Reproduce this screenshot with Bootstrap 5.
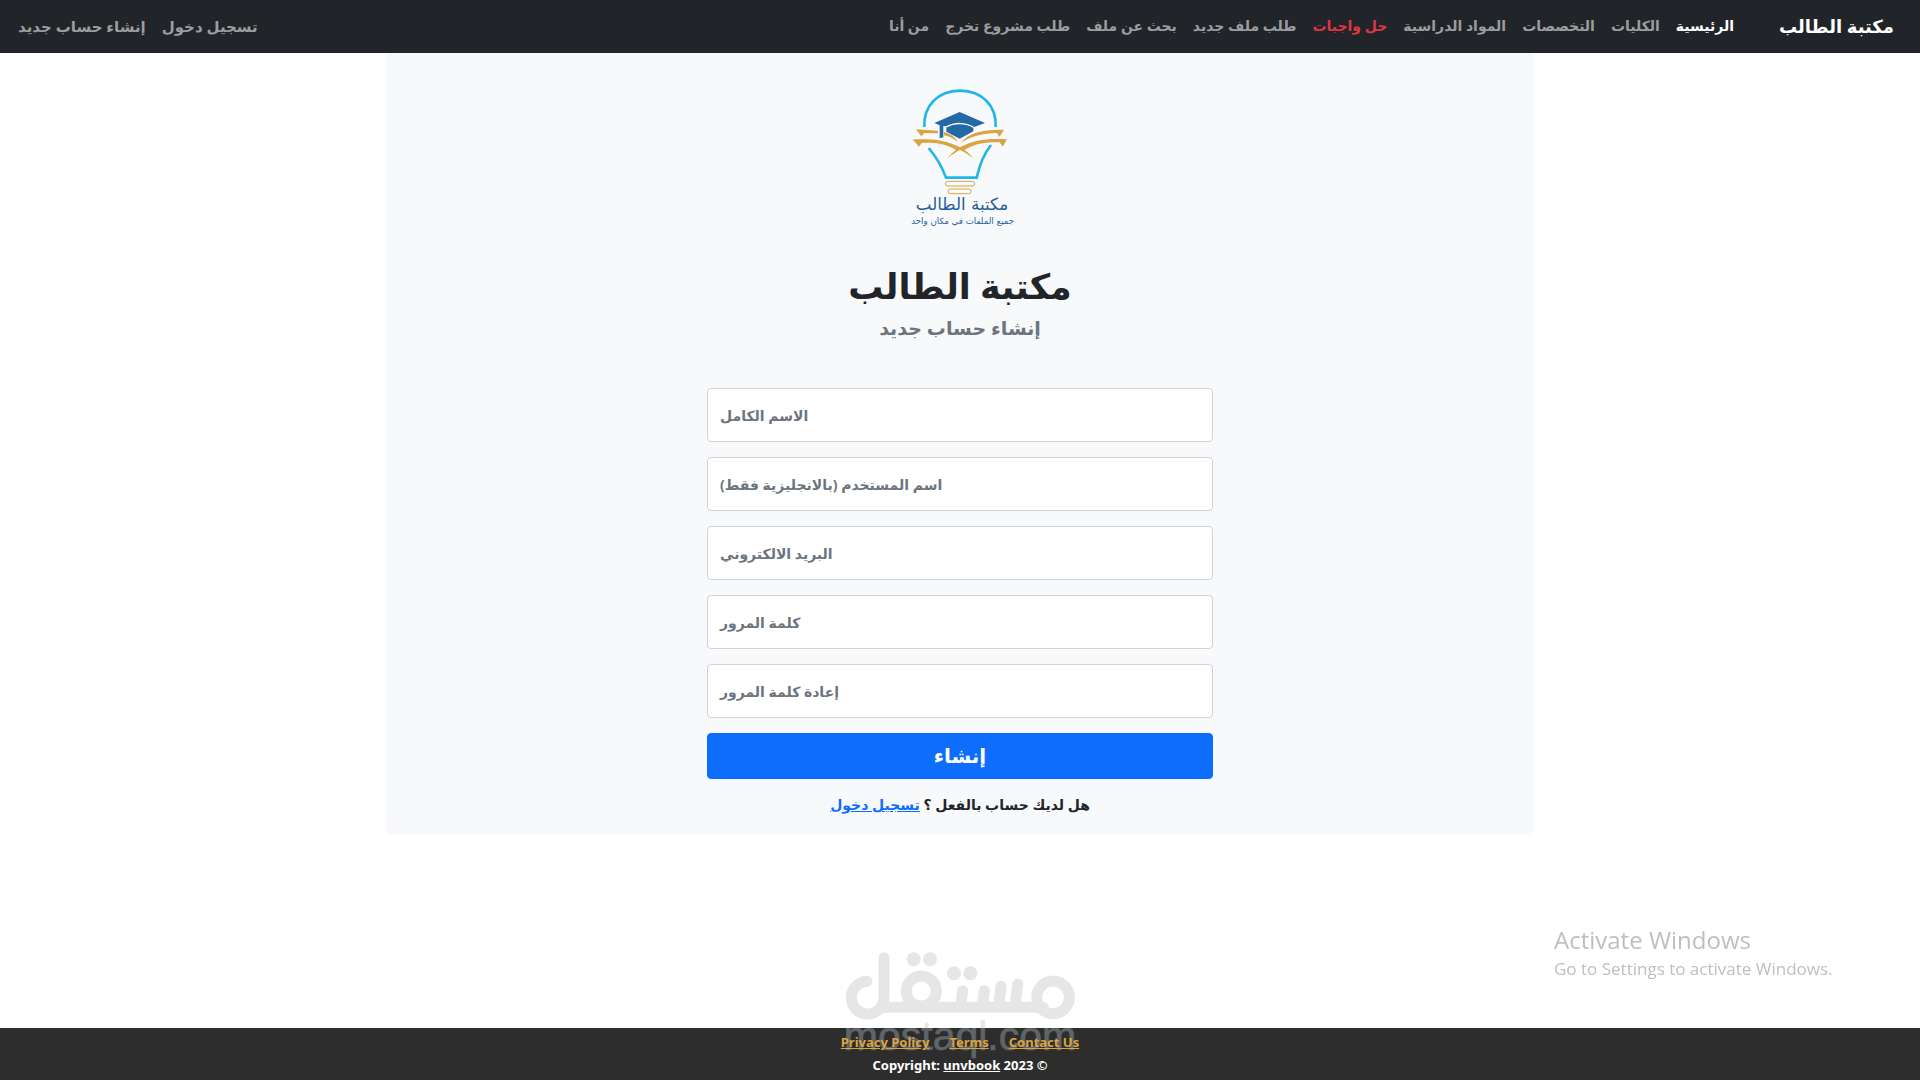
<!DOCTYPE html>
<html lang="ar" dir="rtl">
<head>
<meta charset="utf-8">
<meta name="viewport" content="width=device-width, initial-scale=1">
<title>مكتبة الطالب</title>
<link href="https://cdn.jsdelivr.net/npm/bootstrap@5.3.0/dist/css/bootstrap.min.css" rel="stylesheet">
<style>
  body { font-family: "Noto Sans", "DejaVu Sans", sans-serif; font-weight: 700; font-size: 14px; background: #fff; }
  .site-nav { min-height: 53px; padding: 0 10px 2px; font-size: 14px; line-height: 20px; }
  .site-nav .navbar-brand { font-size: 18px; margin: 0 0 0 21px; padding: 0 16px; }
  .site-nav .nav-link { color: #9b9d9e; padding: 8px; white-space: nowrap; }
  .site-nav .nav-link.active { color: #fff; }
  .site-nav .nav-link.hot { color: #dc3545; }
  .site-nav .account-nav { font-size: 15px; }
  .signup { max-width: 1148px; background: #f8f9fb; padding: 17px 0 20px; }
  .signup-logo { width: 160px; height: 170px; }
  .signup h1 { font-size: 35px; line-height: 44px; font-weight: 700; color: #212529; }
  .signup h2 { font-size: 19px; line-height: 24px; font-weight: 700; color: #6c757d; }
  .signup form { width: 506px; max-width: 100%; gap: 15px; margin-top: 48px; }
  .form-floating > .form-control { height: 54px; min-height: 54px; border-color: #ced4da; border-radius: 4px; font-size: 14px; }
  .form-floating > label { left: 0; right: auto; width: auto; height: 54px; padding: 17px 12px; line-height: 20px; color: #6c757d; }
  .btn-create { height: 46px; font-size: 20px; line-height: 24px; font-weight: 700; border-radius: 4px; padding: 0; }
  .have-account { line-height: 20px; color: #212529; }
  .site-foot { background: #2d2d2d; height: 52px; font-size: 13px; line-height: 23px; padding-top: 3px; }
  .foot-links { gap: 20px; }
  .gold-link { color: #dba43f; }
  .watermark { width: 300px; height: 150px; bottom: 0; left: 50%; margin-left: -150px; }
  .os-note { right: 82px; bottom: 98px; width: 284px; color: #bcc0c4; font-family: "Open Sans", sans-serif; font-weight: 400; white-space: nowrap; }
  .os-note .os-title { font-size: 24px; line-height: 32px; }
  .os-note .os-text { font-size: 17px; line-height: 26px; }
</style>
</head>
<body class="d-flex flex-column min-vh-100">
<nav class="navbar navbar-expand-lg bg-dark site-nav">
  <a class="navbar-brand text-white" href="#">مكتبة الطالب</a>
  <ul class="navbar-nav p-0">
    <li class="nav-item"><a class="nav-link active" href="#">الرئيسية</a></li>
    <li class="nav-item"><a class="nav-link" href="#">الكليات</a></li>
    <li class="nav-item"><a class="nav-link" href="#">التخصصات</a></li>
    <li class="nav-item"><a class="nav-link" href="#">المواد الدراسية</a></li>
    <li class="nav-item"><a class="nav-link hot" href="#">حل واجبات</a></li>
    <li class="nav-item"><a class="nav-link" href="#">طلب ملف جديد</a></li>
    <li class="nav-item"><a class="nav-link" href="#">بحث عن ملف</a></li>
    <li class="nav-item"><a class="nav-link" href="#">طلب مشروع تخرج</a></li>
    <li class="nav-item"><a class="nav-link" href="#">من أنا</a></li>
  </ul>
  <ul class="navbar-nav account-nav p-0 flex-grow-1 justify-content-end">
    <li class="nav-item"><a class="nav-link" href="#">تسجيل دخول</a></li>
    <li class="nav-item"><a class="nav-link" href="#">إنشاء حساب جديد</a></li>
  </ul>
</nav>

<main class="signup w-100 mx-auto rounded d-flex flex-column align-items-center text-center">
  <svg class="signup-logo" viewBox="0 0 480 510" role="img" aria-label="مكتبة الطالب">
    <g fill="none" stroke="#1fb6e9" stroke-width="8">
      <path d="M133 171C130 105 175 63 240 62C305 63 350 105 347 171"/>
      <path d="M146 234C168 260 186 290 198 323H290C298 288 311 252 333 225"/>
    </g>
    <g fill="#d9a441">
      <path d="M98 208C150 206 198 208 240 232C282 208 330 204 381 208L368 230L359 217C320 215 285 220 253 240C264 247 272 255 279 264C264 253 252 246 240 240C228 246 217 253 203 265C210 254 219 247 228 240C195 220 160 217 125 219L117 230Z"/>
      <path d="M108 178L174 182V190L133 189L124 199Z"/>
      <path d="M192 187C212 191 225 202 235 217C222 206 208 199 192 196Z"/>
      <path d="M244 218C262 192 300 178 372 179L359 200L350 189C308 190 274 198 244 218Z"/>
    </g>
    <g fill="#2369a6">
      <path d="M163 159L239 126L315 159L281 172C255 157 222 158 199 169L190 168V202L179 205V166Z"/>
      <path d="M199 171C220 158 258 158 280 172V184L239 206L199 185Z"/>
    </g>
    <path d="M199 171C222 157 258 157 281 172" fill="none" stroke="#f8f9fb" stroke-width="4"/>
    <g fill="none" stroke="#d9a441" stroke-width="3">
      <rect x="196" y="334" width="88" height="14" rx="7"/>
      <rect x="204" y="357" width="69" height="14" rx="7"/>
    </g>
    <g text-anchor="middle" font-family="'DejaVu Sans', sans-serif" font-weight="400" fill="#245f98">
      <text x="246" y="421" font-size="50">مكتبة الطالب</text>
      <text x="248" y="463" font-size="26">جميع الملفات في مكان واحد</text>
    </g>
  </svg>
  <h1 class="mb-0 mt-4">مكتبة الطالب</h1>
  <h2 class="mb-0 mt-2">إنشاء حساب جديد</h2>
  <form class="d-flex flex-column" onsubmit="return false">
    <div class="form-floating">
      <input type="text" class="form-control" id="fullName" placeholder="الاسم الكامل">
      <label for="fullName">الاسم الكامل</label>
    </div>
    <div class="form-floating">
      <input type="text" class="form-control" id="userName" placeholder="اسم المستخدم">
      <label for="userName">اسم المستخدم (بالانجليزية فقط)</label>
    </div>
    <div class="form-floating">
      <input type="email" class="form-control" id="email" placeholder="البريد الالكتروني">
      <label for="email">البريد الالكتروني</label>
    </div>
    <div class="form-floating">
      <input type="password" class="form-control" id="pass" placeholder="كلمة المرور">
      <label for="pass">كلمة المرور</label>
    </div>
    <div class="form-floating">
      <input type="password" class="form-control" id="passAgain" placeholder="إعادة كلمة المرور">
      <label for="passAgain">إعادة كلمة المرور</label>
    </div>
    <button type="submit" class="btn btn-primary btn-create w-100">إنشاء</button>
  </form>
  <p class="have-account mb-0 mt-3">هل لديك حساب بالفعل ؟ <a href="#">تسجيل دخول</a></p>
</main>

<footer class="site-foot mt-auto position-relative text-center text-white">
  <svg class="watermark position-absolute" viewBox="0 0 900 450" aria-hidden="true">
    <defs>
      <linearGradient id="wm" gradientUnits="userSpaceOnUse" x1="0" y1="293" x2="0" y2="295">
        <stop offset="0" stop-color="#e6e6e6"/><stop offset="1" stop-color="#5f6468"/>
      </linearGradient>
    </defs>
    <g fill="none" stroke="#e6e6e6" stroke-width="33" stroke-linecap="round" stroke-linejoin="round">
      <path d="M171 154A49 49 0 1 0 222 203V83"/>
      <path d="M212 232H700"/>
      <circle cx="334" cy="183" r="45"/>
      <circle cx="729" cy="202" r="49"/>
      <path d="M458 182L452 230M523 182L517 230M573 169L566 230M623 162L615 230"/>
    </g>
    <g fill="#e6e6e6">
      <circle cx="311" cy="88" r="21"/><circle cx="360" cy="88" r="21"/>
      <circle cx="432" cy="130" r="21"/><circle cx="481" cy="130" r="21"/>
    </g>
    <text x="450" y="359" direction="ltr" text-anchor="middle" font-family="'Liberation Sans', sans-serif" font-weight="400" font-size="123" fill="url(#wm)" stroke="url(#wm)" stroke-width="2">mostaql.com</text>
  </svg>
  <div class="position-relative" dir="ltr">
    <div class="foot-links d-flex justify-content-center">
      <a class="gold-link" href="#">Privacy Policy</a>
      <a class="gold-link" href="#">Terms</a>
      <a class="gold-link" href="#">Contact Us</a>
    </div>
    <div>Copyright: <a class="text-white" href="#">unvbook</a> 2023 ©</div>
  </div>
</footer>

<aside class="os-note position-fixed" dir="ltr">
  <div class="os-title">Activate Windows</div>
  <div class="os-text">Go to Settings to activate Windows.</div>
</aside>
<script src="https://cdn.jsdelivr.net/npm/bootstrap@5.3.0/dist/js/bootstrap.bundle.min.js"></script>
</body>
</html>
